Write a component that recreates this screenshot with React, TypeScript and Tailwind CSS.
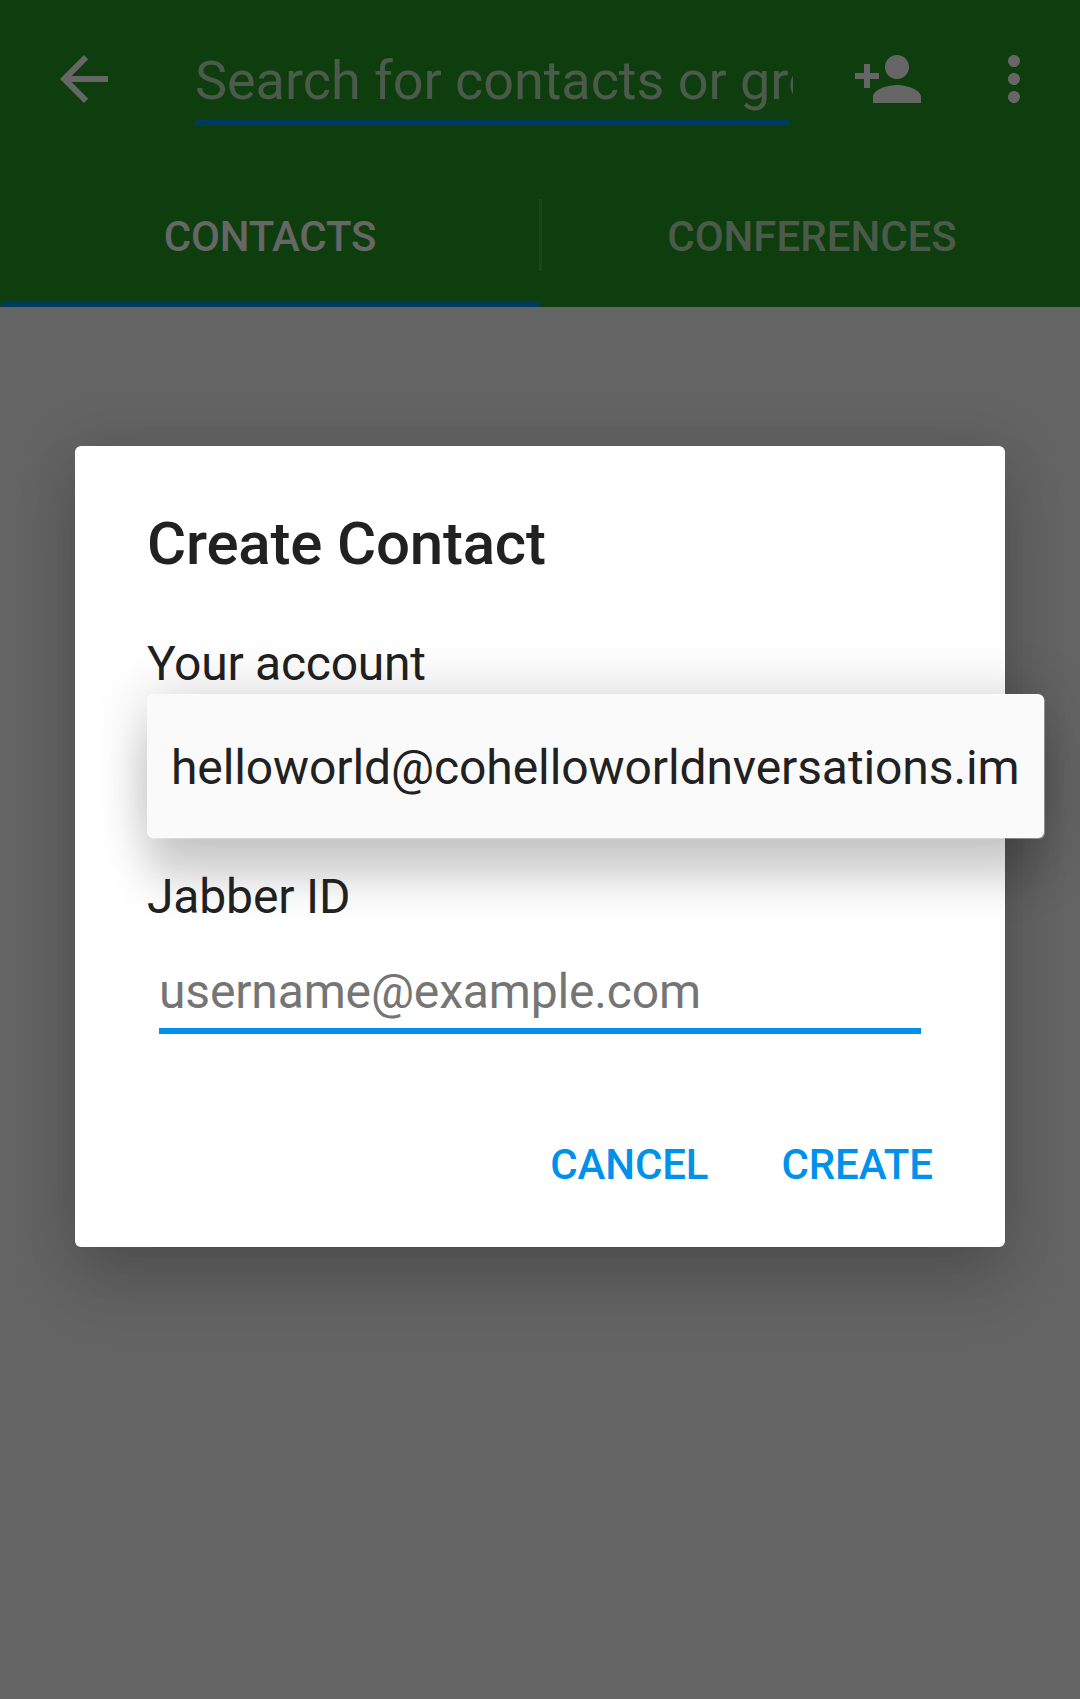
import React from "react";

function Icon({ d }: { d: string }) {
  return (
    <svg viewBox="0 0 24 24" className="size-[72px] shrink-0 fill-[#666666]">
      <path d={d} />
    </svg>
  );
}

const ARROW_BACK = "M20 11H7.83l5.59-5.59L12 4l-8 8 8 8 1.41-1.41L7.83 13H20v-2z";
const PERSON_ADD =
  "M15 12c2.21 0 4-1.79 4-4s-1.79-4-4-4-4 1.79-4 4 1.79 4 4 4zm-9-2V7H4v3H1v2h3v3h2v-3h3v-2H6zm9 4c-2.67 0-8 1.34-8 4v2h16v-2c0-2.66-5.33-4-8-4z";
const MORE_VERT =
  "M12 8c1.1 0 2-.9 2-2s-.9-2-2-2-2 .9-2 2 .9 2 2 2zm0 2c-1.1 0-2 .9-2 2s.9 2 2 2 2-.9 2-2-.9-2-2-2zm0 6c-1.1 0-2 .9-2 2s.9 2 2 2 2-.9 2-2-.9-2-2-2z";

function AppBar() {
  return (
    <header className="flex h-[307px] flex-col bg-[#0f3e0e]">
      <div className="flex h-[163px] items-start pt-[43px] pl-12">
        <Icon d={ARROW_BACK} />
        <div className="ml-[75px] w-[598px] pt-[6px]">
          <div className="overflow-hidden text-[54px] leading-[64px] tracking-[-0.05px] whitespace-nowrap text-[#4c5a4b]">
            Search for contacts or groups
          </div>
          <div className="mt-[7px] h-1.5 w-[594px] bg-[#003a5e]" />
        </div>
        <div className="ml-[59px] flex gap-[54px]">
          <Icon d={PERSON_ADD} />
          <Icon d={MORE_VERT} />
        </div>
      </div>
      <nav className="flex h-36 text-[42px] leading-[48px] font-medium">
        <div className="ml-px flex w-[538px] flex-col border-b-6 border-[#003a5e] pt-[50px] text-center tracking-[-0.25px] text-[#666666]">
          CONTACTS
        </div>
        <div className="mt-9 h-[72px] w-[3px] bg-[#1a4619]" />
        <div className="flex-1 pt-[50px] pl-[2px] text-center text-[#4c5a4b]">CONFERENCES</div>
      </nav>
    </header>
  );
}

function AccountDropdown() {
  return (
    <div className="absolute top-[58px] left-0 h-36 w-[897px] rounded-md bg-[#fafafa] pt-[2px] pl-6 leading-[144px] tracking-[-0.1px] whitespace-nowrap shadow-[1px_1px_0_rgba(250,250,250,0.35),0_0_56px_rgba(0,0,0,0.18),0_46px_42px_rgba(0,0,0,0.15)]">
      helloworld@cohelloworldnversations.im
    </div>
  );
}

function CreateContactDialog() {
  return (
    <section className="mx-[75px] mt-[139px] flex h-[801px] flex-col rounded-md bg-white px-[72px] pt-[62px] text-5xl leading-[56px] text-[#212121] shadow-[0_0_60px_rgba(0,0,0,0.13),0_40px_64px_rgba(0,0,0,0.15)]">
      <h1 className="text-[60px] leading-[72px] font-medium tracking-[-0.2px]">Create Contact</h1>
      <div className="relative mt-14 h-[233px]">
        <div className="tracking-[-0.25px]">Your account</div>
        <AccountDropdown />
      </div>
      <div className="relative tracking-[-0.15px]">Jabber ID</div>
      <div className="mx-3 mt-[39px] h-[70px] border-b-6 border-[#0091ea] tracking-[-0.15px] text-[#757575]">
        username@example.com
      </div>
      <div className="mt-[107px] flex justify-end gap-[73px] text-[42px] leading-[48px] font-medium tracking-[-0.1px] text-[#0091ea]">
        <button>CANCEL</button>
        <button>CREATE</button>
      </div>
    </section>
  );
}

export default function App() {
  return (
    <main className="h-[1699px] w-[1080px] overflow-hidden bg-[#646464] font-['Roboto',sans-serif]">
      <AppBar />
      <CreateContactDialog />
    </main>
  );
}
